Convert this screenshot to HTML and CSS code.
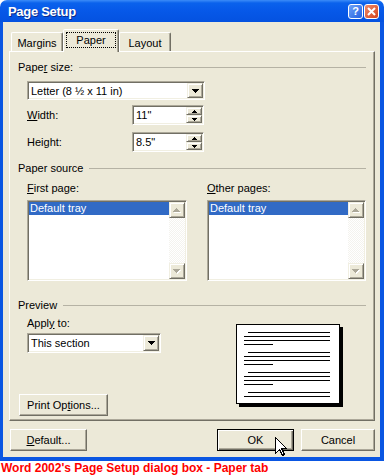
FILE: index.html
```html
<!DOCTYPE html>
<html>
<head>
<meta charset="utf-8">
<title>Page Setup</title>
<link rel="stylesheet" href="styles.css">
</head>
<body>
<div class="window">
  <div class="titlebar">
    <span class="title">Page Setup</span>
    <div class="tb-buttons">
      <span class="tb-btn help">?</span>
      <span class="tb-btn close"><svg width="9" height="9" viewBox="0 0 9 9"><path d="M1 1L8 8M8 1L1 8" stroke="#fff" stroke-width="2"/></svg></span>
    </div>
  </div>
  <div class="frame">
    <div class="client">
      <div class="tabs">
        <div class="tab tab-m">Margins</div>
        <div class="tab tab-active"><span class="focus">Paper</span></div>
        <div class="tab tab-l">Layout</div>
      </div>
      <div class="panel">
        <div class="ghead g1"><span>Pape<u>r</u> size:</span><i class="rule"></i></div>
        <div class="sunken combo combo-size">
          <span class="field">Letter (8 ½ x 11 in)</span>
          <span class="raised dd"><svg width="7" height="4" viewBox="0 0 7 4"><path d="M0 0h7v1h-1v1h-1v1h-1v1h-1v-1h-1v-1h-1v-1h-1z"/></svg></span>
        </div>
        <div class="row row-w">
          <span class="rlabel"><u>W</u>idth:</span>
          <div class="sunken spin">
            <span class="field">11"</span>
            <span class="spinbtns">
              <span class="raised sb"><svg width="5" height="3" viewBox="0 0 5 3"><path d="M2 0h1v1h1v1h1v1h-5v-1h1v-1h1z"/></svg></span>
              <span class="raised sb"><svg width="5" height="3" viewBox="0 0 5 3"><path d="M0 0h5v1h-1v1h-1v1h-1v-1h-1v-1h-1z"/></svg></span>
            </span>
          </div>
        </div>
        <div class="row row-h">
          <span class="rlabel">Hei<u>g</u>ht:</span>
          <div class="sunken spin">
            <span class="field">8.5"</span>
            <span class="spinbtns">
              <span class="raised sb"><svg width="5" height="3" viewBox="0 0 5 3"><path d="M2 0h1v1h1v1h1v1h-5v-1h1v-1h1z"/></svg></span>
              <span class="raised sb"><svg width="5" height="3" viewBox="0 0 5 3"><path d="M0 0h5v1h-1v1h-1v1h-1v-1h-1v-1h-1z"/></svg></span>
            </span>
          </div>
        </div>
        <div class="ghead g2"><span>Paper source</span><i class="rule"></i></div>
        <div class="sources">
          <span class="slabel"><u>F</u>irst page:</span>
          <span class="slabel"><u>O</u>ther pages:</span>
          <div class="sunken listbox">
            <div class="items"><div class="item sel">Default tray</div></div>
            <div class="vscroll">
              <span class="raised sbtn"><svg width="8" height="5" viewBox="0 0 8 5"><path d="M4 1h1v1h1v1h1v1h1v1h-7v-1h1v-1h1v-1h1z" fill="#fff"/><path d="M3 0h1v1h1v1h1v1h1v1h-7v-1h1v-1h1v-1h1z" fill="#ACA899"/></svg></span>
              <span class="track"></span>
              <span class="raised sbtn"><svg width="8" height="5" viewBox="0 0 8 5"><path d="M1 1h7v1h-1v1h-1v1h-1v1h-1v-1h-1v-1h-1v-1h-1z" fill="#fff"/><path d="M0 0h7v1h-1v1h-1v1h-1v1h-1v-1h-1v-1h-1v-1h-1z" fill="#ACA899"/></svg></span>
            </div>
          </div>
          <div class="sunken listbox">
            <div class="items"><div class="item sel">Default tray</div></div>
            <div class="vscroll">
              <span class="raised sbtn"><svg width="8" height="5" viewBox="0 0 8 5"><path d="M4 1h1v1h1v1h1v1h1v1h-7v-1h1v-1h1v-1h1z" fill="#fff"/><path d="M3 0h1v1h1v1h1v1h1v1h-7v-1h1v-1h1v-1h1z" fill="#ACA899"/></svg></span>
              <span class="track"></span>
              <span class="raised sbtn"><svg width="8" height="5" viewBox="0 0 8 5"><path d="M1 1h7v1h-1v1h-1v1h-1v1h-1v-1h-1v-1h-1v-1h-1z" fill="#fff"/><path d="M0 0h7v1h-1v1h-1v1h-1v1h-1v-1h-1v-1h-1v-1h-1z" fill="#ACA899"/></svg></span>
            </div>
          </div>
        </div>
        <div class="ghead g3"><span>Preview</span><i class="rule"></i></div>
        <div class="preview">
          <div class="pv-left">
            <span class="apply">Appl<u>y</u> to:</span>
            <div class="sunken combo combo-apply">
              <span class="field">This section</span>
              <span class="raised dd"><svg width="7" height="4" viewBox="0 0 7 4"><path d="M0 0h7v1h-1v1h-1v1h-1v1h-1v-1h-1v-1h-1v-1h-1z"/></svg></span>
            </div>
            <button class="btn btn-print">Print Op<u>t</u>ions...</button>
          </div>
          <svg class="page" width="107" height="83" viewBox="0 0 107 83" shape-rendering="crispEdges">
            <rect x="3" y="3" width="104" height="80" fill="#000"/>
            <rect x="0" y="0" width="104" height="80" fill="#000"/>
            <rect x="1" y="1" width="102" height="78" fill="#fff"/>
            <g fill="#000">
              <rect x="12" y="8" width="82" height="1"/>
              <rect x="8" y="12" width="86" height="1"/>
              <rect x="8" y="16" width="86" height="1"/>
              <rect x="8" y="20" width="29" height="1"/>
              <rect x="12" y="28" width="82" height="1"/>
              <rect x="8" y="32" width="86" height="1"/>
              <rect x="8" y="36" width="86" height="1"/>
              <rect x="8" y="40" width="29" height="1"/>
              <rect x="12" y="48" width="82" height="1"/>
              <rect x="8" y="52" width="86" height="1"/>
              <rect x="8" y="56" width="86" height="1"/>
              <rect x="8" y="60" width="29" height="1"/>
              <rect x="12" y="68" width="82" height="1"/>
              <rect x="8" y="72" width="86" height="1"/>
            </g>
          </svg>
        </div>
      </div>
      <div class="buttons">
        <button class="btn btn-default"><u>D</u>efault...</button>
        <button class="btn btn-ok">OK</button>
        <button class="btn btn-cancel">Cancel</button>
      </div>
    </div>
  </div>
</div>
<div class="caption">Word 2002's Page Setup dialog box - Paper tab</div>
<svg class="cursor" width="13" height="20" viewBox="0 0 13 20" shape-rendering="crispEdges">
  <path d="M0.5 0.5V16.5L4.5 12.5L7.5 18.5L9.5 17.5L6.5 11.5H11.5Z" fill="#fff" stroke="#000" stroke-width="1"/>
</svg>
</body>
</html>
```
FILE: styles.css
```css
* { box-sizing: border-box; }
body {
  margin: 0;
  width: 384px;
  height: 475px;
  overflow: hidden;
  position: relative;
  background: #fff;
  font-family: "Liberation Sans", Arial, sans-serif;
  font-size: 11px;
  color: #000;
}
.window {
  width: 384px;
  height: 461px;
  display: flex;
  flex-direction: column;
}
.titlebar {
  height: 22px;
  flex: none;
  display: flex;
  align-items: center;
  padding: 0 5px 0 8px;
  border-radius: 7px 7px 0 0;
  background: linear-gradient(#3C8CF8 0, #0A62EC 3px, #0658E8 50%, #0452E0 100%);
}
.title {
  flex: 1;
  color: #fff;
  font-weight: bold;
  font-size: 13px;
  letter-spacing: -0.3px;
  text-shadow: 1px 1px 0 #0A2C8C;
}
.tb-buttons { display: flex; gap: 1px; }
.tb-btn {
  width: 15px;
  height: 15px;
  border: 1px solid #fff;
  border-radius: 3px;
  display: flex;
  align-items: center;
  justify-content: center;
  color: #fff;
  font-weight: bold;
  font-size: 11px;
}
.help { background: linear-gradient(135deg, #6EA2F8, #2460E0); }
.close { background: linear-gradient(135deg, #EE8A6A, #D4441C); }
.frame {
  flex: 1;
  display: flex;
  border-style: solid;
  border-color: #0A56E2;
  border-width: 0 4px 4px 3px;
}
.client {
  flex: 1;
  display: flex;
  flex-direction: column;
  background: #ECE9D8;
  padding: 7px 5px 0 6px;
}
/* tabs */
.tabs {
  height: 22px;
  display: flex;
  align-items: flex-end;
  padding-left: 2px;
}
.tab {
  height: 19px;
  display: flex;
  align-items: center;
  justify-content: center;
  border: 1px solid;
  border-bottom: none;
  border-color: #fff #716F64 transparent #fff;
  border-radius: 2px 2px 0 0;
  box-shadow: inset -1px 0 #ACA899;
  padding-top: 1px;
}
.tab-m { width: 52px; }
.tab-l { width: 52px; }
.tab-active {
  width: 56px;
  height: 23px;
  margin-bottom: -1px;
  position: relative;
  z-index: 1;
  background: #ECE9D8;
  padding-top: 0;
  padding-bottom: 2px;
}
.focus {
  border: 1px dotted #000;
  padding: 0 9px;
  line-height: 14px;
}
/* panel */
.panel {
  width: 366px;
  height: 370px;
  display: flex;
  flex-direction: column;
  border: 1px solid;
  border-color: #fff #716F64 #716F64 #fff;
  box-shadow: inset -1px -1px #ACA899;
  padding: 0 8px;
}
.ghead {
  display: flex;
  align-items: center;
  gap: 6px;
  height: 13px;
  line-height: 13px;
}
.ghead .rule {
  flex: 1;
  height: 0;
  border-top: 1px solid #B5B2A4;
}
.g1 { margin-top: 9px; }
.g2 { margin-top: 10px; }
.g3 { margin-top: 18px; }
.sunken {
  background: #fff;
  border: 1px solid;
  border-color: #ACA899 #fff #fff #ACA899;
  box-shadow: inset 1px 1px #716F64, inset -1px -1px #F1EFE2;
  padding: 1px;
  display: flex;
}
.raised {
  background: #ECE9D8;
  border: 1px solid;
  border-color: #F1EFE2 #716F64 #716F64 #F1EFE2;
  box-shadow: inset 1px 1px #fff, inset -1px -1px #ACA899;
  display: flex;
  align-items: center;
  justify-content: center;
}
.field {
  flex: 1;
  padding-left: 2px;
  display: flex;
  align-items: center;
  white-space: nowrap;
}
.combo { height: 19px; margin-left: 9px; }
.combo-size { width: 178px; margin-top: 7px; }
.dd { width: 16px; }
.row {
  display: flex;
  align-items: center;
  margin-left: 9px;
}
.row-w { margin-top: 5px; }
.row-h { margin-top: 7px; }
.rlabel { width: 105px; }
.spin { width: 72px; height: 20px; }
.spinbtns {
  width: 16px;
  display: flex;
  flex-direction: column;
}
.sb { flex: 1; }
/* sources */
.sources {
  display: grid;
  grid-template-columns: 160px 159px;
  column-gap: 20px;
  row-gap: 5px;
  margin-left: 9px;
  margin-top: 7px;
}
.slabel { line-height: 13px; }
.listbox { height: 81px; }
.items { flex: 1; }
.item { height: 13px; line-height: 13px; padding-left: 1px; white-space: nowrap; }
.item.sel { background: #316AC5; color: #fff; }
.vscroll {
  width: 16px;
  display: flex;
  flex-direction: column;
}
.sbtn { height: 16px; flex: none; }
.track {
  flex: 1;
  background-image: repeating-conic-gradient(#fff 0 25%, #F4F3EE 0 50%);
  background-size: 2px 2px;
}
/* preview */
.preview {
  display: flex;
  align-items: flex-start;
}
.pv-left {
  width: 218px;
  display: flex;
  flex-direction: column;
  align-items: flex-start;
}
.apply { margin-left: 9px; margin-top: 5px; line-height: 13px; }
.combo-apply { width: 134px; height: 20px; margin-top: 3px; }
.page { margin-top: 12px; display: block; }
/* buttons */
.btn {
  font-family: "Liberation Sans", Arial, sans-serif;
  font-size: 11px;
  color: #000;
  height: 22px;
  padding: 0;
  background: #ECE9D8;
  border: 1px solid;
  border-color: #fff #716F64 #716F64 #fff;
  box-shadow: inset -1px -1px #ACA899;
  border-radius: 0;
}
.btn-print { width: 89px; margin-left: 1px; margin-top: 41px; }
.buttons {
  display: flex;
  margin-top: 8px;
}
.btn-default { width: 77px; margin-left: 1px; }
.btn-ok {
  width: 77px;
  margin-left: auto;
  border-color: #000;
  box-shadow: inset 1px 1px #fff, inset -1px -1px #716F64, inset -2px -2px #ACA899;
}
.btn-cancel { width: 74px; margin-left: 7px; }
.caption {
  color: #f00;
  font-weight: bold;
  font-size: 12px;
  line-height: 14px;
  padding-left: 1px;
  white-space: nowrap;
}
.cursor {
  position: absolute;
  left: 275px;
  top: 437px;
}
```
